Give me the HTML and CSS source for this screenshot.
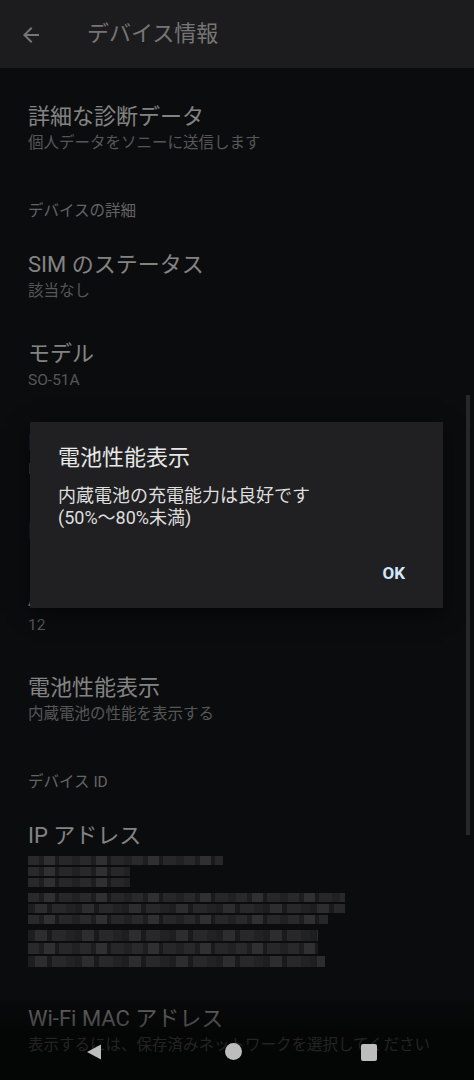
FILE: index.html
```html
<!DOCTYPE html>
<html lang="ja">
<head>
<meta charset="UTF-8">
<meta name="viewport" content="width=device-width, initial-scale=1.0">
<title>デバイス情報</title>
<link rel="stylesheet" href="styles.css">
</head>
<body>

<div class="screen">
  <header class="appbar">
    <svg class="back" viewBox="0 0 24 24" width="24" height="24">
      <path d="M20 11H7.83l5.59-5.59L12 4l-8 8 8 8 1.41-1.41L7.83 13H20v-2z" fill="currentColor"/>
    </svg>
    <h1 class="appbar-title">デバイス情報</h1>
  </header>

  <main class="list">
    <div class="item">
      <div class="item-title">詳細な診断データ</div>
      <div class="item-sub">個人データをソニーに送信します</div>
    </div>

    <div class="section">デバイスの詳細</div>

    <div class="item">
      <div class="item-title">SIM のステータス</div>
      <div class="item-sub">該当なし</div>
    </div>
    <div class="item">
      <div class="item-title">モデル</div>
      <div class="item-sub">SO-51A</div>
    </div>
    <div class="item">
      <div class="item-title">IMEI</div>
      <div class="item-sub">IMEI（SIM スロット 1）</div>
    </div>
    <div class="item">
      <div class="item-title">IMEI（SIM スロット 2）</div>
    </div>
    <div class="item">
      <div class="item-title">Android バージョン</div>
      <div class="item-sub">12</div>
    </div>
    <div class="item">
      <div class="item-title">電池性能表示</div>
      <div class="item-sub">内蔵電池の性能を表示する</div>
    </div>

    <div class="section">デバイス ID</div>

    <div class="item item-masked">
      <div class="item-title">IP アドレス</div>
      <div class="mask">
        <div class="mask-group">
          <div class="mask-line w195"></div>
          <div class="mask-line w102"></div>
          <div class="mask-line w102"></div>
        </div>
        <div class="mask-group">
          <div class="mask-line w317"></div>
          <div class="mask-line w317 alt"></div>
          <div class="mask-line w300"></div>
        </div>
        <div class="mask-group tall">
          <div class="mask-line w290 alt"></div>
          <div class="mask-line w290"></div>
          <div class="mask-line w297 alt"></div>
        </div>
      </div>
    </div>

    <div class="item">
      <div class="item-title">Wi-Fi MAC アドレス</div>
      <div class="item-sub">表示するには、保存済みネットワークを選択してください</div>
    </div>
  </main>

  <div class="scrollbar"></div>
  <div class="scrim"></div>

  <div class="dialog">
    <h2 class="dialog-title">電池性能表示</h2>
    <p class="dialog-body">内蔵電池の充電能力は良好です<br>(50%〜80%未満)</p>
    <div class="dialog-actions">
      <button type="button" class="dialog-btn">OK</button>
    </div>
  </div>

  <nav class="navbar">
    <svg class="nav-icon" viewBox="0 0 16 18" width="16" height="18">
      <path d="M1 9 L15 1.5 L15 16.5 Z" fill="currentColor"/>
    </svg>
    <span class="nav-home"></span>
    <span class="nav-recent"></span>
  </nav>
</div>

</body>
</html>
```

FILE: styles.css
```css
body {
    margin: 0;
    padding: 0;
    background-color: #111315;
    font-family: Roboto, "Noto Sans CJK JP", sans-serif;
}

.screen {
    position: relative;
    width: 474px;
    height: 1080px;
    overflow: hidden;
    background-color: #111315;
}

.appbar {
    height: 68px;
    display: flex;
    align-items: center;
    background-color: #2b2b2e;
    color: #b4b4b4;
}

.back {
    margin-left: 19px;
    margin-top: 2px;
    width: 24px;
    height: 24px;
}

.appbar-title {
    margin: 0 0 0 44px;
    font-size: 22px;
    font-weight: normal;
    line-height: 30px;
}

.list {
    padding-top: 16px;
}

.item {
    padding: 18px 28px 19px;
}

.item-title {
    font-size: 22px;
    line-height: 30px;
    color: #cacaca;
    white-space: nowrap;
}

.item-sub {
    font-size: 15.5px;
    line-height: 22px;
    color: #858585;
    white-space: nowrap;
}

.section {
    padding: 28px 28px 11px;
    font-size: 15.5px;
    line-height: 20px;
    color: #9a9a9a;
}

.item-masked {
    padding-bottom: 19px;
}

.mask {
    display: flex;
    flex-direction: column;
    gap: 6px;
    padding-top: 5px;
}

.mask-group {
    display: flex;
    flex-direction: column;
    gap: 2px;
}

.mask-line {
    height: 9px;
    background-color: #333336;
    background-image: repeating-linear-gradient(90deg,
        #404044 0 11px, #2e2e31 11px 16px, #4a4a4e 16px 27px,
        #29292c 27px 31px, #3c3c40 31px 44px, #343437 44px 52px);
}

.mask-line.alt {
    background-image: repeating-linear-gradient(90deg,
        #2e2e31 0 7px, #45454a 7px 19px, #29292c 19px 24px,
        #3e3e42 24px 38px, #353538 38px 47px);
}

.mask-group.tall .mask-line {
    height: 11px;
}

.w102 { width: 102px; }
.w195 { width: 195px; }
.w290 { width: 290px; }
.w297 { width: 297px; }
.w300 { width: 300px; }
.w317 { width: 317px; }

.scrollbar {
    position: absolute;
    left: 466px;
    top: 395px;
    width: 4px;
    height: 440px;
    background-color: #3e3e42;
}

.scrim {
    position: absolute;
    inset: 0;
    background-color: rgba(0, 0, 0, 0.35);
}

.dialog {
    position: absolute;
    left: 30px;
    top: 422px;
    width: 413px;
    height: 186px;
    box-sizing: border-box;
    padding: 22px 28px 0;
    background-color: #202022;
    box-shadow: 0 6px 20px rgba(0, 0, 0, 0.55);
    display: flex;
    flex-direction: column;
}

.dialog-title {
    margin: 0;
    font-size: 22px;
    font-weight: normal;
    line-height: 28px;
    color: #e8e8e8;
}

.dialog-body {
    margin: 13px 0 0;
    font-size: 18px;
    line-height: 22px;
    color: #dedede;
}

.dialog-actions {
    display: flex;
    justify-content: flex-end;
    margin-top: 32px;
}

.dialog-btn {
    margin-right: 10px;
    padding: 0;
    border: none;
    background: none;
    font-family: Roboto, sans-serif;
    font-size: 17px;
    font-weight: bold;
    line-height: 24px;
    color: #d2e7f8;
}

.navbar {
    position: absolute;
    left: 0;
    right: 0;
    bottom: 0;
    height: 80px;
    box-sizing: border-box;
    padding-bottom: 19px;
    display: flex;
    align-items: flex-end;
    color: #bdbdbd;
    background: linear-gradient(rgba(0, 0, 0, 0.2), rgba(0, 0, 0, 0.6) 45%);
}

.nav-icon {
    margin-left: 86px;
}

.nav-home {
    width: 17px;
    height: 17px;
    margin-left: 123px;
    margin-bottom: 1px;
    border-radius: 50%;
    background-color: currentColor;
}

.nav-recent {
    width: 16px;
    height: 17px;
    margin-left: 119px;
    border-radius: 2px;
    background-color: currentColor;
}
```
